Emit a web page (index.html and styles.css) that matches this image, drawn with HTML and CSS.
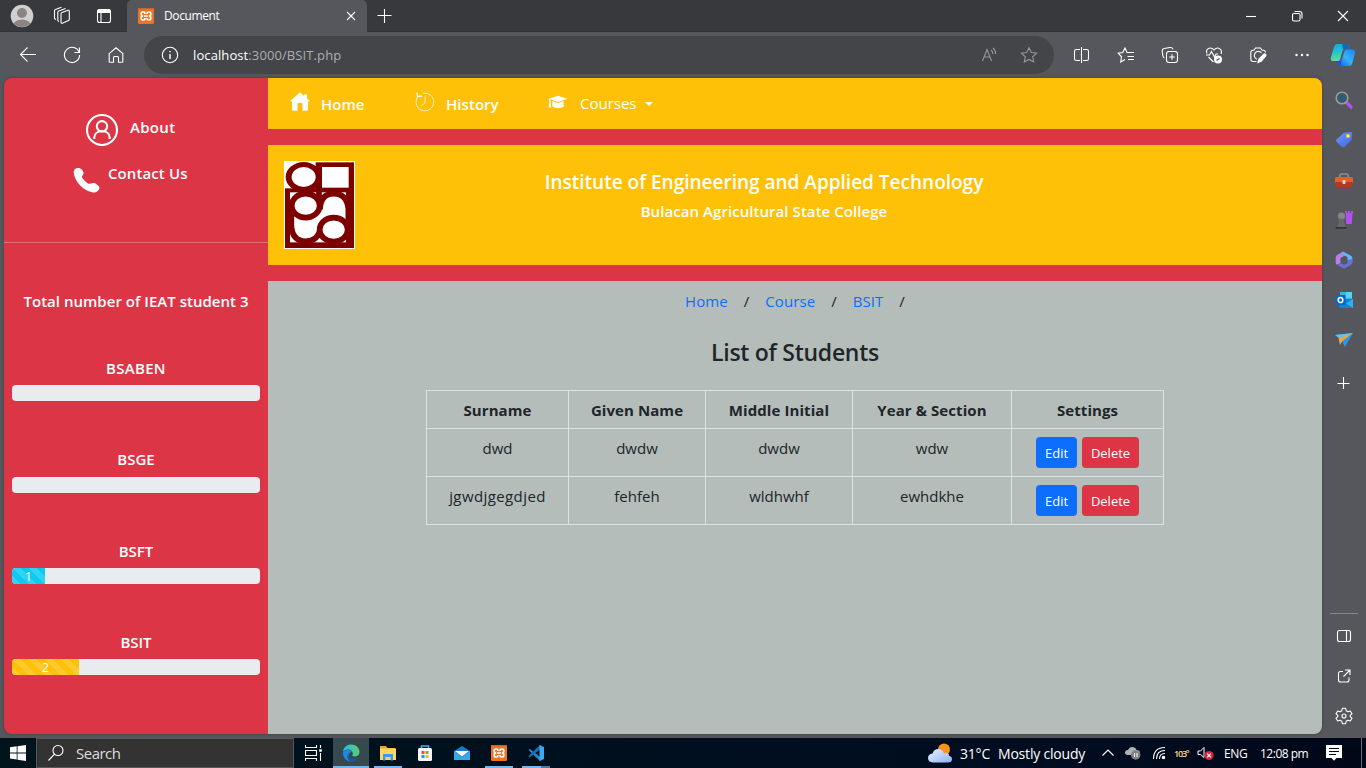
FILE: index.html
```
<!DOCTYPE html>
<html lang="en">
<head>
<meta charset="utf-8">
<title>Document</title>
<link rel="stylesheet" href="styles.css">
</head>
<body>
<div class="desktop">
  <header class="titlebar">
    <div class="cell c44"><svg width="24" height="24" viewBox="0 0 24 24"><defs><clipPath id="av"><circle cx="12" cy="12" r="11"/></clipPath></defs><circle cx="12" cy="12" r="11.3" fill="#d2d0ce"/><g clip-path="url(#av)" fill="#8a8583"><circle cx="12" cy="9" r="5"/><ellipse cx="12" cy="21" rx="8.5" ry="5.5"/></g></svg></div>
    <div class="cell c36"><svg class="line" width="20" height="20" viewBox="0 0 20 20"><path d="M9 7.8Q9 6.8 10 6.4L16 4.3Q17.3 4 17.3 5.3V13.2Q17.3 14.2 16.4 14.6L10.4 17.2Q9 17.5 9 16.2Z"/><path d="M7 15.5Q5.8 15 5.8 14V6.3Q5.8 5.3 6.8 4.9L13.5 2.5M4 13.5Q2.5 13 2.5 12V4.8Q2.5 3.8 3.5 3.4L9.5 1.3"/></svg></div>
    <div class="cell c48"><svg class="line" width="18" height="18" viewBox="0 0 18 18"><rect x="2.5" y="2.5" width="13" height="13" rx="2"/><path d="M2.5 5.5H15.5M6 5.5V15.5"/><path d="M3 4H15" stroke-width="3"/></svg></div>
    <div class="tab">
      <svg width="16" height="16" viewBox="0 0 16 16"><use href="#xampp"/></svg>
      <span class="tabtitle">Document</span>
      <svg class="line tabclose" width="10" height="10" viewBox="0 0 10 10"><path d="M1 1L9 9M9 1L1 9"/></svg>
    </div>
    <div class="cell c34"><svg class="line" width="16" height="16" viewBox="0 0 16 16"><path d="M8.5 1V15M1.5 7.5H15.5"/></svg></div>
    <div class="grow"></div>
    <div class="cell c46"><svg class="line" width="12" height="12"><path d="M1 6.5H11"/></svg></div>
    <div class="cell c46"><svg class="line" width="12" height="12" viewBox="0 0 12 12"><rect x="1.5" y="3.5" width="7.5" height="7.5" rx="1.5"/><path d="M3.5 1.5H8.5Q11 1.5 11 4V8.5"/></svg></div>
    <div class="cell c46"><svg class="line" width="12" height="12" viewBox="0 0 12 12"><path d="M1 1L11 11M11 1L1 11"/></svg></div>
  </header>

  <div class="toolbar">
    <div class="cell c44"><svg class="line" width="18" height="18" viewBox="0 0 18 18"><path d="M17 8.5H1.5M8.5 1.5L1.5 8.5L8.5 15.5"/></svg></div>
    <div class="cell c44"><svg class="line" width="18" height="18" viewBox="0 0 18 18"><path d="M16.2 6.5A7.6 7.6 0 1 0 16.6 9M16.5 1.5V6.5H11.5"/></svg></div>
    <div class="cell c44"><svg class="line" width="18" height="18" viewBox="0 0 18 18"><path d="M2.2 7.6L9 1.8L15.8 7.6V15.5Q15.8 16.3 15 16.3H11.5V11.5Q11.5 10.5 10.5 10.5H7.5Q6.5 10.5 6.5 11.5V16.3H3Q2.2 16.3 2.2 15.5Z"/></svg></div>
    <div class="address">
      <svg class="line" width="18" height="18" viewBox="0 0 18 18"><circle cx="9" cy="9" r="7.7"/><path d="M9 8V13M9 5V6.3" stroke-width="1.4"/></svg>
      <span class="url"><b>localhost</b>:3000/BSIT.php</span>
      <svg class="line dim read" width="18" height="18" viewBox="0 0 18 18"><path d="M1.5 15L6 3.5L10.5 15M3.2 11H9M10 4Q12 5.5 11.8 8M12 2Q15 4.5 14.5 8"/></svg>
      <svg class="line dim" width="18" height="18" viewBox="0 0 18 18"><path d="M9 1.7L11.3 6.5L16.6 7.2L12.7 10.8L13.7 16L9 13.4L4.3 16L5.3 10.8L1.4 7.2L6.7 6.5Z"/></svg>
    </div>
    <div class="cell c44"><svg class="line" width="18" height="18" viewBox="0 0 18 18"><path d="M7 3.5H3.5Q1.5 3.5 1.5 5.3V12.7Q1.5 14.5 3.5 14.5H7M10 3.5H13.5Q15.5 3.5 15.5 5.3V12.7Q15.5 14.5 13.5 14.5H10M8.5 1V17"/></svg></div>
    <div class="cell c44"><svg class="line" width="18" height="18" viewBox="0 0 18 18"><path d="M11.5 6.5H10L8 2L5.7 6.5L1.2 7.2L4.5 10.8L3.7 16L8 13.6M10.5 6.5H17M10.5 10.5H17M11 13.5H17"/></svg></div>
    <div class="cell c44"><svg class="line" width="18" height="18" viewBox="0 0 18 18"><rect x="5.5" y="5.5" width="11" height="11" rx="2.5"/><path d="M11 8.2V13.8M8.2 11H13.8M3.5 12Q2.2 11.5 1.8 9.5L1.2 5Q1 3 3 2.5L9 1.5Q11.5 1.3 12 3.3"/></svg></div>
    <div class="cell c44"><svg class="line" width="18" height="18" viewBox="0 0 18 18"><path d="M2 7.5C0 3 5.5 0 9 4C12.5 0 18 3 16 8M1 9H4.5L6.5 5.5L9.5 11L11 8H13M3.5 11L8.5 16"/><circle cx="13" cy="13.5" r="4" fill="#fff" stroke="none"/><path d="M11.5 14.5L14.5 12.5" stroke="#55575c"/></svg></div>
    <div class="cell c44"><svg class="line" width="18" height="18" viewBox="0 0 18 18"><path d="M7.5 15.5H4Q1.8 15.5 1.8 13.3V6.5Q1.8 4.3 4 4.3H5L6.5 2H11.5L13 4.3H14.5Q16.5 4.5 16.5 6.5M12.5 7A4 4 0 1 0 8 13.2"/><path d="M9 16.5L10 13L15 8Q17 7.5 17 9.5L12.5 15Z" fill="#fff"/></svg></div>
    <div class="cell c44"><svg width="18" height="18" fill="#fff"><circle cx="3.5" cy="9" r="1.2"/><circle cx="9" cy="9" r="1.2"/><circle cx="14.5" cy="9" r="1.2"/></svg></div>
    <div class="cell copilot"><svg width="26" height="26" viewBox="0 0 26 26"><defs><linearGradient id="cp1" x2=".2" y2="1"><stop stop-color="#16a2df"/><stop offset=".55" stop-color="#23c8d4"/><stop offset="1" stop-color="#65dd91"/></linearGradient><linearGradient id="cp2" x1="1" x2="0" y2="1"><stop stop-color="#1b82f5"/><stop offset=".5" stop-color="#35b3ff"/><stop offset="1" stop-color="#1652d9"/></linearGradient></defs><path d="M7 2H17Q18.5 2 19 4L19.5 7H15Q13 7 12.3 9.5L10 17.5Q9.5 19 8 19H3Q0 19 1 15L4 5Q5 2 7 2Z" fill="url(#cp1)"/><path d="M19 24H10Q8 24 7.5 21L7 19H9Q11.5 19 12.3 16L14.5 9.5Q15 7.5 17 7.5H22Q26 7.5 25 11.5L22.5 20.5Q21.5 24 19 24Z" fill="url(#cp2)"/><path d="M12 2H17Q18.5 2 19 4L19.5 7H15Q13.5 7 13 8Z" fill="#126cb5"/><path d="M7 19H9Q10.6 19 11.5 17.5L10.5 24Q8 24 7.5 21Z" fill="#2053db"/></svg></div>
  </div>

  <div class="middle">
    <main class="page">
      <aside class="side">
        <div class="links">
          <a class="link"><svg width="32" height="32" viewBox="0 0 32 32" fill="none" stroke="#fff" stroke-width="2.1"><circle cx="16" cy="16" r="15"/><circle cx="16" cy="12.3" r="5.2"/><path d="M8.3 25V23.5C8.3 15.2 23.7 15.2 23.7 23.5V25"/></svg><span>About</span></a>
          <a class="link contact"><svg width="27" height="26" viewBox="0 0 27 26"><path d="M4.5 1C2 1.4 .5 3 .7 5.5C1.5 14.5 10.5 24 20 25.5C23 26 26 24 26.5 21C26.8 19.5 24 17.5 22.4 16.5C20.5 15.3 17.5 17 15.8 16.8C14 16 9 11.5 8.8 9.7C9 8.8 11 7.5 10.5 5.5C9.8 3.2 8.2 .5 4.5 1Z" fill="#fff"/></svg><span>Contact Us</span></a>
        </div>
        <p class="total">Total number of IEAT student 3</p>
        <section class="prog"><h6 class="aben">BSABEN</h6><div class="track"></div></section>
        <section class="prog"><h6>BSGE</h6><div class="track"></div></section>
        <section class="prog"><h6>BSFT</h6><div class="track"><div class="bar info" style="width:33px">1</div></div></section>
        <section class="prog"><h6>BSIT</h6><div class="track"><div class="bar warn" style="width:67px">2</div></div></section>
      </aside>
      <div class="main">
        <nav class="nav">
          <a class="n-home"><svg width="20" height="20" viewBox="0 0 20 20" fill="#fff"><path d="M10 .3L14 4V2.5H17V6.5L19.7 9L18 9.8V18.8H12.5V12Q12.5 11 11.5 11H8.5Q7.5 11 7.5 12V18.8H2V9.8L.3 9Z"/></svg><span>Home</span></a>
          <a class="n-hist"><svg width="20" height="20" viewBox="0 0 20 20" fill="none" stroke="#fff" stroke-width=".9"><path d="M3.2 4.3A8.8 8.8 0 1 0 8 1.4M10 4.5V11L6.5 13.5" opacity=".85"/><path d="M2 .5L2.5 4.5L7 4" stroke-width="1.3"/></svg><span>History</span></a>
          <a class="n-course"><svg width="20" height="15" viewBox="0 0 20 15" fill="#fff"><path d="M10 .8L19.3 3.7L10 7.2L1 3.8Z"/><path d="M4.5 6L10 8.2L15.5 6V9.5L16.2 11.2Q13 13.2 10 13.2Q7 13.2 4.3 11.2Z"/><path d="M.8 3.7L2.6 4.5V8L3.2 12.5H.6L1.2 8Z"/></svg><span>Courses</span><i class="caret"></i></a>
        </nav>
        <div class="banner">
          <svg class="logo" width="71" height="88" viewBox="0 0 213 264"><rect width="213" height="264" fill="#fff"/><g fill="#7d0000"><rect x="95" y="4" width="115" height="90"/><ellipse cx="59" cy="48" rx="54" ry="45"/><rect x="3" y="82" width="207" height="179"/></g><g fill="#fff"><ellipse cx="59" cy="48" rx="36" ry="30"/><rect x="114" y="18" width="80" height="62"/><rect x="18" y="94" width="168" height="150"/></g><g fill="none" stroke="#7d0000" stroke-width="17"><path d="M105 85V125M22 150V193Q24 240 65 241Q102 239 108 206M108 145Q110 98 149 98Q188 98 193 143V210"/><ellipse cx="65" cy="134" rx="42" ry="36" fill="#fff"/><ellipse cx="149" cy="206" rx="42" ry="36" fill="#fff"/></g></svg>
          <div class="heads"><h5>Institute of Engineering and Applied Technology</h5><h6>Bulacan Agricultural State College</h6></div>
        </div>
        <div class="content">
          <div class="crumbs"><a>Home</a><span>/</span><a>Course</a><span>/</span><a>BSIT</a><span>/</span></div>
          <h4>List of Students</h4>
          <table>
            <colgroup><col class="w1"><col class="w2"><col class="w3"><col class="w4"><col class="w5"></colgroup>
            <tr><th>Surname</th><th>Given Name</th><th>Middle Initial</th><th>Year &amp; Section</th><th>Settings</th></tr>
            <tr><td>dwd</td><td>dwdw</td><td>dwdw</td><td>wdw</td><td><div class="btns"><button class="edit">Edit</button><button class="del">Delete</button></div></td></tr>
            <tr><td class="long">jgwdjgegdjed</td><td>fehfeh</td><td>wldhwhf</td><td>ewhdkhe</td><td><div class="btns"><button class="edit">Edit</button><button class="del">Delete</button></div></td></tr>
          </table>
        </div>
      </div>
    </main>
    <aside class="rail">
      <div class="ri"><svg width="20" height="20" viewBox="0 0 20 20"><path d="M12 12L17 17" stroke="#b74df2" stroke-width="3.2" stroke-linecap="round"/><circle cx="8" cy="8" r="5.8" fill="#355b70" stroke="#9a9a9a" stroke-width="1.6"/></svg></div>
      <div class="ri"><svg width="20" height="20" viewBox="0 0 20 20"><defs><linearGradient id="tg" y2="1"><stop stop-color="#6d9cff"/><stop offset="1" stop-color="#3d63e0"/></linearGradient></defs><path d="M11.5 2.5L17 2Q18.3 2 18.2 3.5L17.8 9Q17.6 10 17 10.6L10.5 17Q9.3 18 8 17L2.5 11.7Q1.5 10.5 2.5 9.5L9.5 3.2Q10.4 2.5 11.5 2.5Z" fill="url(#tg)"/><circle cx="14" cy="6" r="1.5" fill="#fff" stroke="#f4c21c" stroke-width="1.2"/></svg></div>
      <div class="ri"><svg width="20" height="20" viewBox="0 0 20 20"><path d="M6 7V5.5Q6 4 7.5 4H12.5Q14 4 14 5.5V7" fill="none" stroke="#8f9293" stroke-width="1.5"/><rect x="1" y="7" width="18" height="6" rx="1.5" fill="#e0622a"/><path d="M2 12H18V15.5Q18 17 16.5 17H3.5Q2 17 2 15.5Z" fill="#b63a16"/><rect x="8.5" y="10" width="3" height="4" rx="1" fill="#d9dcdc"/></svg></div>
      <div class="ri"><svg width="20" height="20" viewBox="0 0 20 20"><path d="M11 1H13V3H14V1H16V3H17V1H19.3L18.3 6L17.8 14H12L12 6Z" fill="#b14ff0"/><circle cx="7.5" cy="6" r="3.6" fill="#858585"/><path d="M4 8.8H11L9.8 10.5L10.7 15L12.8 18.5H1.7L4.3 15L5.2 10.5Z" fill="#686868"/><path d="M2 17H12.5V18.7H1.5Z" fill="#333"/></svg></div>
      <div class="ri"><svg width="20" height="20" viewBox="0 0 20 20"><path d="M9 1.5L3 5Q1.7 6 1.7 7.5V13Q2 15 4 14.5L6.5 13V8L12 5Z" fill="#b87fe8"/><path d="M9 1.5L17 5.8Q18.3 6.5 18.3 8V12.5L13.5 10V7L7.5 4Z" fill="#5fb5f5"/><path d="M18.3 9V12.5Q18.3 14 17 14.7L11 18.2Q10 18.7 9 18.2L3 14.5Q5 15 6.5 13L10 15L13.5 13V10Z" fill="#6670d8"/></svg></div>
      <div class="ri"><svg width="20" height="20" viewBox="0 0 20 20"><rect x="6" y="2" width="12" height="10" fill="#37b5ee"/><rect x="12" y="2" width="6" height="6" fill="#58d0fb"/><path d="M5 9H19V18H7Q5 18 5 16Z" fill="#1483d2"/><path d="M19 9L12 13.5L19 18Z" fill="#2fb0ea"/><rect x="1.5" y="5" width="10" height="10" rx="1" fill="#0a68c5"/><ellipse cx="6.5" cy="10" rx="2.3" ry="2.6" fill="none" stroke="#fff" stroke-width="1.5"/></svg></div>
      <div class="ri"><svg width="20" height="20" viewBox="0 0 20 20"><path d="M1 5L19 3L11 17L7.5 10Z" fill="#2596e8"/><path d="M1 5L19 3L7 9.5Z" fill="#5fc3f5"/><path d="M19 3L4.5 8.5L6 15L8.5 11Z" fill="#f3a432"/></svg></div>
      <div class="ri plus"><svg class="line" width="14" height="14"><path d="M6.5 1V13M.5 7.5H12.5"/></svg></div>
      <div class="grow"></div>
      <div class="rule"></div>
      <div class="ri"><svg class="line" width="18" height="18" viewBox="0 0 18 18"><rect x="2.5" y="3.5" width="13" height="11" rx="2"/><path d="M11.5 3.5V14.5"/></svg></div>
      <div class="ri"><svg class="line" width="18" height="18" viewBox="0 0 18 18"><path d="M8 4.5H5.5Q3.5 4.5 3.5 6.5V13Q3.5 15 5.5 15H12Q14 15 14 13V10.5M10 3H15V8M15 3L8.5 9.5"/></svg></div>
      <div class="ri"><svg class="line" width="18" height="18" viewBox="0 0 18 18"><path d="M7.4 1.3H10.6L11.2 3.7L13 4.7L15.3 4L17 6.8L15.2 8.4V9.6L17 11.2L15.3 14L13 13.3L11.2 14.3L10.6 16.7H7.4L6.8 14.3L5 13.3L2.7 14L1 11.2L2.8 9.6V8.4L1 6.8L2.7 4L5 4.7L6.8 3.7Z" stroke-linejoin="round"/><circle cx="9" cy="9" r="2"/></svg></div>
    </aside>
  </div>

  <footer class="taskbar">
    <div class="cell c36"><svg width="16" height="16" viewBox="0 0 16 16" fill="#fff"><path d="M0 2.3L6.7 1.3V7.5H0ZM7.5 1.2L16 0V7.5H7.5ZM0 8.4H6.7V14.6L0 13.6ZM7.5 8.4H16V16L7.5 14.8Z"/></svg></div>
    <div class="search"><svg class="line" width="18" height="18" viewBox="0 0 18 18"><circle cx="11" cy="6.5" r="5"/><path d="M7.5 10.2L1.5 16.5"/></svg><span>Search</span></div>
    <div class="cell c39"><svg class="line" width="18" height="18" viewBox="0 0 18 18"><path d="M.5 1V3.5H11.5V1M.5 17V14.5H11.5V17M.5 6.5H11.5V11.5H.5ZM15.5 1V4M15.5 9V17"/><path d="M14.2 6.5H16.8" stroke-width="2.5"/></svg></div>
    <div class="app on"><svg width="18" height="18" viewBox="0 0 18 18"><defs><linearGradient id="e1" x2="1"><stop stop-color="#2ab5e9"/><stop offset="1" stop-color="#58d06a"/></linearGradient></defs><path d="M1 8C1.5 3 5 .5 9 .5C14 .5 17.5 4 17.5 8C17.5 11 15 12.5 12.5 12.5C10 12.5 10 11.5 10.7 10.5C11.3 8 9 5.5 6 5.5C3.5 5.5 2 6.5 1 8Z" fill="url(#e1)"/><path d="M1 8C2 6.5 4 5.5 6.3 5.7C8.5 6 9.5 7 9.8 8C7 8 5 12 9 15.5C10.5 17 12 16.5 14 15.7C9 19.5 .5 17 1 8Z" fill="#1b8ae0"/><path d="M6.7 9C5 14 10 17 16 13C15 16 11.5 18 9 17.4C5 16.5 4.2 11 6.7 9Z" fill="#1558a8"/></svg></div>
    <div class="app run"><svg width="18" height="18" viewBox="0 0 18 18"><path d="M1 2H7L8.5 4H16V6H1Z" fill="#e8a422"/><rect x="1" y="4.5" width="16" height="11.5" fill="#ffd65e"/><path d="M4 10H14V16.5H11.5V13H6.5V16.5H4Z" fill="#3d9bea"/></svg></div>
    <div class="app"><svg width="18" height="18" viewBox="0 0 18 18"><path d="M5.5 5V2H12.5V5" fill="none" stroke="#3ab6eb" stroke-width="1.6"/><rect x="2" y="4" width="14" height="13" rx="1.5" fill="#f6f7f8"/><path d="M5.5 7H8.5V10H5.5Z" fill="#f25022"/><path d="M9.5 7H12.5V10H9.5Z" fill="#7fba00"/><path d="M5.5 11H8.5V14H5.5Z" fill="#00a4ef"/><path d="M9.5 11H12.5V14H9.5Z" fill="#ffb900"/></svg></div>
    <div class="app"><svg width="18" height="18" viewBox="0 0 18 18"><path d="M1 7L9 2L17 7V16H1Z" fill="#1479cf"/><path d="M2 7H16L9 12.5Z" fill="#fff"/><path d="M1 7L9 13L17 7V16H1Z" fill="#35a8e8"/></svg></div>
    <div class="app run"><svg width="16" height="16" viewBox="0 0 16 16"><g id="xampp"><rect width="16" height="16" rx="1.5" fill="#ee7424"/><path d="M0 0H16V1.2H0Z" fill="#bf6628"/><path d="M7 6V5.3Q7 4 5.5 4H4.8Q3.2 4 3.2 5.5V6.3Q3.2 7.3 4.2 8Q3.2 8.7 3.2 9.7V10.5Q3.2 12 4.8 12H5.5Q7 12 7 10.7V10M9 6V5.3Q9 4 10.5 4H11.2Q12.8 4 12.8 5.5V6.3Q12.8 7.3 11.8 8Q12.8 8.7 12.8 9.7V10.5Q12.8 12 11.2 12H10.5Q9 12 9 10.7V10M6 8H10" fill="none" stroke="#fff" stroke-width="1.7"/></g></svg></div>
    <div class="app run split"><svg width="18" height="18" viewBox="0 0 18 18"><path d="M1.5 6L3 5L14.5 14V16L13 17Z" fill="#2489ca"/><path d="M1.5 12L3 13.2L14.5 4.5V2L13 1Z" fill="#1070b3"/><path d="M12.5 1L17 3V15L12.5 17Z" fill="#3ea6ee"/></svg></div>
    <div class="grow"></div>
    <svg class="weather" width="26" height="22" viewBox="0 0 26 22"><defs><linearGradient id="cl" y2="1"><stop stop-color="#e6efff"/><stop offset="1" stop-color="#8fb5f3"/></linearGradient></defs><circle cx="17" cy="7.5" r="6" fill="#f7941d"/><path d="M6 20.5Q1 20 1 16Q1 12 5.5 11.5Q7 6.5 12 7Q16 7.5 17 11.5Q19 10 21 11.5Q22.5 12.5 22 13.8Q25 14.5 25 17Q25 20.5 21 20.5Z" fill="url(#cl)"/></svg>
    <span class="temp">31°C</span><span class="cond">Mostly cloudy</span>
    <svg class="line up" width="14" height="10" viewBox="0 0 14 10"><path d="M1.5 7.5L7 2L12.5 7.5"/></svg>
    <svg class="cloud" width="18" height="16" viewBox="0 0 18 16"><path d="M4 10Q.7 10 1 7.3Q1.3 5 4 5Q5.5 1.5 9 2Q12 2.5 12.5 5Q16 5 16 8Q16 10 14 10Z" fill="#aeb1b5"/><circle cx="11.7" cy="10" r="4.7" fill="#7d8083"/><path d="M10.5 8V12M13 8V12" stroke="#fff"/></svg>
    <svg class="line wifi" width="14" height="14" viewBox="0 0 14 14"><path d="M1.5 13Q1.5 1.5 13 1.5M4.5 13Q4.5 4.5 13 4.5M7.5 13Q7.5 7.5 13 7.5"/><circle cx="11.5" cy="11.5" r="1.2" fill="#fff"/></svg>
    <span class="deg">103°</span>
    <svg class="vol" width="18" height="16" viewBox="0 0 18 16"><path d="M1 6H3.5L7 2.5V12.5L3.5 9.5H1Z" fill="none" stroke="#fff"/><circle cx="12" cy="10.5" r="4.6" fill="#d7263d"/><path d="M10.2 8.7L13.8 12.3M13.8 8.7L10.2 12.3" stroke="#fff" stroke-width="1.2"/></svg>
    <span class="eng">ENG</span><span class="time">12:08 pm</span>
    <svg class="note" width="18" height="18" viewBox="0 0 18 18"><path d="M1 1H17V14H11.5L9 16.8L6.5 14H1Z" fill="#fff"/><path d="M4 4.5H14M4 7.5H14M4 10.5H11" stroke="#00081c"/></svg>
    <i class="peek"></i>
  </footer>
</div>
</body>
</html>
```
FILE: styles.css
```
* { box-sizing: border-box; }
body { margin: 0; font-family: "Open Sans", "Noto Sans", sans-serif; font-size: 15px; color: #212529; }
h4, h5, h6, p { margin: 0; }
svg { flex: none; display: block; }
.desktop { width: 1366px; height: 768px; display: flex; flex-direction: column; background: #55575c; overflow: hidden; white-space: nowrap; }
.line { fill: none; stroke: #fff; stroke-width: 1.1; }
.dim { stroke: #96979a; }
.grow { flex: 1; }
.cell { display: flex; align-items: center; justify-content: center; flex: none; }
.c34 { width: 34px; } .c36 { width: 36px; } .c39 { width: 39px; } .c44 { width: 44px; } .c46 { width: 46px; } .c48 { width: 47px; }

.titlebar { height: 32px; flex: none; display: flex; background: #38393c; box-shadow: inset 0 -1px #303134; }
.tab { width: 240px; display: flex; align-items: center; padding: 0 11px 0 11px; background: #55575c; border-radius: 5px 5px 0 0; color: #fff; font-size: 12px; }
.tabtitle { flex: 1; padding-left: 10px; letter-spacing: -.4px; line-height: 16px; margin-top: -1px; }

.toolbar { height: 46px; flex: none; display: flex; padding-left: 6px; }
.address { width: 910px; height: 38px; margin: 4px 6px 0 6px; border-radius: 19px; background: #434549; display: flex; align-items: center; padding: 0 16px 0 17px; }
.url { flex: 1; padding-left: 14px; font-size: 13px; letter-spacing: .1px; color: #acadaf; }
.url b { font-weight: 400; color: #fff; }
.read { margin-right: 21px; }
.copilot { width: 38px; }

.middle { height: 660px; flex: none; display: flex; padding-left: 4px; }
.page { width: 1318px; height: 656px; display: flex; border-radius: 8px; overflow: hidden; background: #dc3545; box-shadow: 0 0 3px #3d3f43; }
.side { width: 264px; color: #fff; text-align: center; }
.links { height: 165px; padding: 36px 0 0 82px; border-bottom: 1px solid #e36c78; }
.link { display: flex; gap: 12px; font-weight: 600; height: 32px; line-height: 27px; letter-spacing: .3px; }
.contact { margin: 21px 0 0 -13px; gap: 8px; line-height: 13px; letter-spacing: .1px; }
.total { height: 115px; line-height: 116px; font-weight: 600; letter-spacing: .02px; }
.prog { height: 91.4px; padding: 0 8px; }
.prog h6 { font-size: 15px; font-weight: 600; line-height: 20px; height: 27.2px; }
.prog .aben { letter-spacing: .3px; }
.track { height: 16px; border-radius: 4px; background: #e9ecef; overflow: hidden; display: flex; }
.bar { color: #fff; font-size: 12px; line-height: 17px; background-image: linear-gradient(45deg, rgba(255,255,255,.15) 25%, transparent 25%, transparent 50%, rgba(255,255,255,.15) 50%, rgba(255,255,255,.15) 75%, transparent 75%); background-size: 16px 16px; }
.info { background-color: #0dcaf0; }
.warn { background-color: #ffc107; }

.main { width: 1054px; }
.nav { height: 51px; background: #ffc107; color: #fff; display: flex; padding-left: 22px; font-weight: 600; }
.nav a { display: flex; }
.nav span { line-height: 52px; }
.n-home { width: 125px; gap: 11px; } .n-hist { width: 133px; gap: 11px; letter-spacing: .05px; } .n-course { gap: 12px; font-weight: 400; }
.n-home svg, .n-hist svg { margin-top: 14px; }
.n-course svg { margin-top: 17px; }
.n-course span { line-height: 51px; }
.caret { width: 0; height: 0; border: 4px solid transparent; border-top-color: #fff; border-bottom: 0; margin: 24px 0 0 -4px; }
.banner { height: 120px; margin: 16px 0; padding: 16px 149px 0 16px; background: #ffc107; display: flex; }
.heads { flex: 1; color: #fff; text-align: center; padding-top: 8px; }
.heads h5 { font-size: 19px; font-weight: 600; line-height: 26px; }
.heads h6 { font-size: 15px; font-weight: 600; line-height: 20px; margin-top: 6px; letter-spacing: .06px; }
.content { height: 453px; background: #b4bdba; text-align: center; }
.crumbs { display: flex; justify-content: center; padding: 10px 0 0; line-height: 20px; gap: 16px; letter-spacing: .07px; }
.crumbs a { color: #0d6efd; }
h4 { font-size: 23px; font-weight: 600; line-height: 30px; margin-top: 26px; letter-spacing: -.28px; }
table { width: 738px; margin: 23px 0 0 158px; border-collapse: collapse; table-layout: fixed; }
.w1 { width: 142px; } .w2 { width: 137px; } .w3 { width: 147px; } .w4 { width: 159px; } .w5 { width: 152px; }
th, td { border: 1px solid #dee2e6; padding: 8px 0 0; vertical-align: top; line-height: 23px; }
th { height: 38px; font-weight: 700; letter-spacing: .08px; }
td { height: 48px; }
.long { letter-spacing: .4px; }
.btns { display: flex; justify-content: center; gap: 5px; }
button { border: 0; height: 31px; padding: 0; border-radius: 4px; color: #fff; font: 13px "Open Sans", sans-serif; }
.edit { width: 41px; background: #0d6efd; }
.del { width: 57px; background: #dc3545; }

.rail { width: 44px; display: flex; flex-direction: column; padding-top: 2px; padding-bottom: 2px; }
.ri { height: 40px; display: flex; align-items: center; justify-content: center; }
.plus { height: 46px; }
.rule { width: 28px; height: 1px; margin: 0 8px 2px; background: #85878a; }

.taskbar { height: 30px; flex: none; display: flex; align-items: center; color: #fff; background: linear-gradient(90deg, #00141c, #000c20 80%, #000818); }
.taskbar > .cell, .app { height: 30px; }
.search { width: 258px; height: 30px; background: #333; border: 1px solid #55595b; display: flex; align-items: center; padding-left: 10px; gap: 11px; color: #ddd; letter-spacing: -.5px; }
.app { width: 37px; display: flex; align-items: center; justify-content: center; }
.on { background: #35494f; width: 36px; box-shadow: inset 0 -2px #75b6ec; }
.run { background: linear-gradient(#75b6ec, #75b6ec) center bottom / 28px 2px no-repeat; }
.split { background-image: linear-gradient(90deg, #75b6ec 68%, #4a7ba3 68%); }
.temp { margin-left: 7px; width: 38px; font-size: 14px; letter-spacing: -.2px; }
.cond { width: 103px; font-size: 14px; letter-spacing: -.2px; }
.cloud { margin-left: 9px; } .wifi { margin-left: 10px; }
.deg { width: 23px; margin-left: 8px; font-size: 9px; font-weight: 600; letter-spacing: -1.2px; color: #ffd38a; }
.eng { margin-left: 9px; width: 36px; font-size: 12px; letter-spacing: -.4px; }
.time { font-size: 12px; width: 65px; letter-spacing: -.5px; }
.note { margin-right: 18px; }
.peek { width: 1px; height: 30px; margin-right: 4px; background: #666c75; }
.vol { margin-left: 0; }
```
